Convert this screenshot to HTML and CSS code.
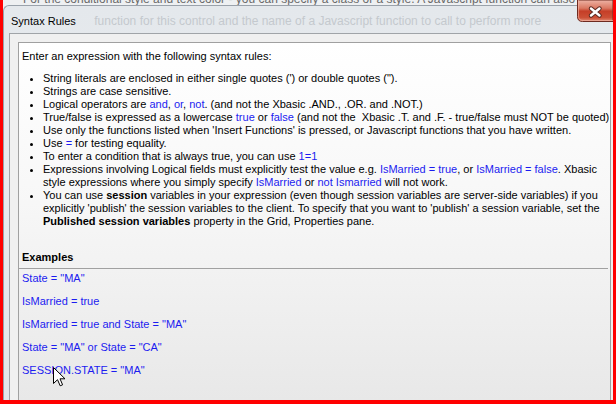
FILE: index.html
```html
<!DOCTYPE html>
<html>
<head>
<meta charset="utf-8">
<title>Syntax Rules</title>
<link rel="stylesheet" href="styles.css">
</head>
<body>
<div class="shot">
  <div class="desk"><div class="desk-text">For the conditional style and text color - you can specify a class or a style. A Javascript function can also be used</div></div>
  <div class="window">
    <div class="titlebar">
      <div class="capbtn"><svg class="capbtn-art" width="36" height="22" viewBox="0 0 36 22"><defs><linearGradient id="capgrad" x1="0" y1="0" x2="0" y2="1"><stop offset="0" stop-color="#eeb3a5"/><stop offset="0.38" stop-color="#da7862"/><stop offset="0.52" stop-color="#c53e27"/><stop offset="0.82" stop-color="#cc5036"/><stop offset="1" stop-color="#e2907a"/></linearGradient></defs><path d="M0.5 0 V16.5 Q0.5 21.5 5.5 21.5 H36 V0 Z" fill="url(#capgrad)" stroke="#6e2a20" stroke-width="1"/><path d="M1.5 0 V16 Q1.5 20.5 6 20.5 H36" fill="none" stroke="#f3b9aa" stroke-opacity="0.6" stroke-width="1"/><path d="M14 8.5 L22.5 15.5 M22.5 8.5 L14 15.5" stroke="#5a2a22" stroke-width="4.4" stroke-linecap="round"/><path d="M14 8.5 L22.5 15.5 M22.5 8.5 L14 15.5" stroke="#ffffff" stroke-width="2.4" stroke-linecap="round"/></svg></div>
      <span class="title">Syntax Rules</span>
      <span class="glass-text">function for this control and the name of a Javascript function to call to perform more</span>
    </div>
    <div class="client">
      <div class="panel">
        <p class="intro">Enter an expression with the following syntax rules:</p>
        <ul class="rules">
          <li>String literals are enclosed in either single quotes (') or double quotes (").</li>
          <li>Strings are case sensitive.</li>
          <li>Logical operators are <span class="kw">and</span>, <span class="kw">or</span>, <span class="kw">not</span>. (and not the Xbasic .AND., .OR. and .NOT.)</li>
          <li>True/false is expressed as a lowercase <span class="kw">true</span> or <span class="kw">false</span> (and not the&nbsp; Xbasic .T. and .F. - true/false must NOT be quoted)</li>
          <li>Use only the functions listed when 'Insert Functions' is pressed, or Javascript functions that you have written.</li>
          <li>Use <span class="kw">=</span> for testing equality.</li>
          <li>To enter a condition that is always true, you can use <span class="kw">1=1</span></li>
          <li>Expressions involving Logical fields must explicitly test the value e.g. <span class="kw">IsMarried = true</span>, or <span class="kw">IsMarried = false</span>. Xbasic<br>style expressions where you simply specify <span class="kw">IsMarried</span> or <span class="kw">not Ismarried</span> will not work.</li>
          <li>You can use <b>session</b> variables in your expression (even though session variables are server-side variables) if you<br>explicitly 'publish' the session variables to the client. To specify that you want to 'publish' a session variable, set the<br><b>Published session variables</b> property in the Grid, Properties pane.</li>
        </ul>
        <h3 class="ex-head">Examples</h3>
        <p class="ex">State = "MA"</p>
        <p class="ex">IsMarried = true</p>
        <p class="ex">IsMarried = true and State = "MA"</p>
        <p class="ex">State = "MA" or State = "CA"</p>
        <p class="ex">SESSION.STATE = "MA"</p>
      </div>
    </div>
  </div>
  <svg class="cursor" width="13" height="20" viewBox="0 0 13 20">
    <path d="M0.5 0.5 L0.5 16.5 L4.5 12.7 L7.2 18.8 L9.6 17.8 L7 11.8 L12 11.8 Z" fill="#ffffff" stroke="#000000" stroke-width="1" stroke-linejoin="miter"/>
  </svg>
</div>
</body>
</html>
```
FILE: styles.css
```css
html, body {
  margin: 0;
  padding: 0;
  background: #ff0000;
}

.shot {
  position: relative;
  width: 616px;
  height: 404px;
  box-sizing: border-box;
  border-left: 3px solid #ff0000;
  border-right: 3px solid #ff0000;
  border-bottom: 4px solid #ff0000;
  background: #eef0f2;
  overflow: hidden;
  font-family: "Liberation Sans", Arial, sans-serif;
}

.desk {
  height: 5px;
  overflow: hidden;
  white-space: nowrap;
}

.desk-text {
  margin-top: -7px;
  padding-left: 20px;
  font-size: 12px;
  line-height: 12px;
  color: #6a6a6a;
}

.window {
  width: 610px;
  height: 395px;
  box-sizing: border-box;
  display: flex;
  flex-direction: column;
  border-top: 1px solid #9aa2ab;
  border-left: 1px solid #9aa2ab;
  border-radius: 6px 0 0 0;
  background: linear-gradient(#e4e8ec, #e9ebee 40%, #e3e6e9);
}

.titlebar {
  height: 27px;
  flex: none;
  padding-left: 7px;
  white-space: nowrap;
  line-height: 27px;
}

.capbtn {
  float: right;
  width: 36px;
  height: 22px;
  margin-top: -6px;
  line-height: 0;
}

.capbtn-art {
  display: block;
}

.title {
  font-size: 11px;
  color: #000;
}

.glass-text {
  margin-left: 14px;
  font-size: 12px;
  color: #c4c9ce;
}

.client {
  flex: 1;
  min-height: 0;
  min-width: 0;
  display: flex;
  flex-direction: column;
  margin-left: 5px;
  border-top: 1px solid #a0a4a8;
  border-left: 1px solid #a0a4a8;
  background: #f0f0f0;
  padding: 8px 2px 0 8px;
}

.panel {
  flex: 1;
  min-height: 0;
  min-width: 0;
  overflow: hidden;
  border: 1px solid #a0a0a0;
  border-bottom: none;
  background: linear-gradient(#ffffff 0%, #f7f7f7 45%, #e8e8e8 100%);
  padding: 7px 2px 0 0;
  font-size: 11px;
  line-height: 13px;
  color: #000;
}

.intro {
  margin: 0 0 9px;
  padding-left: 3px;
}

.rules {
  margin: 0;
  padding-left: 24px;
  list-style: disc;
  white-space: nowrap;
}

.rules li {
  line-height: 13px;
}

.kw {
  color: #1c1cf0;
}

.ex-head {
  margin: 23px 0 0;
  padding: 0 0 4px 3px;
  font-size: 11px;
  line-height: 13px;
  font-weight: bold;
  border-bottom: 1px solid #a0a0a0;
}

.ex {
  margin: 3px 0 10px;
  padding-left: 3px;
  color: #1c1cf0;
}

.ex + .ex {
  margin-top: 0;
}

.cursor {
  position: absolute;
  left: 50px;
  top: 367px;
}
```
